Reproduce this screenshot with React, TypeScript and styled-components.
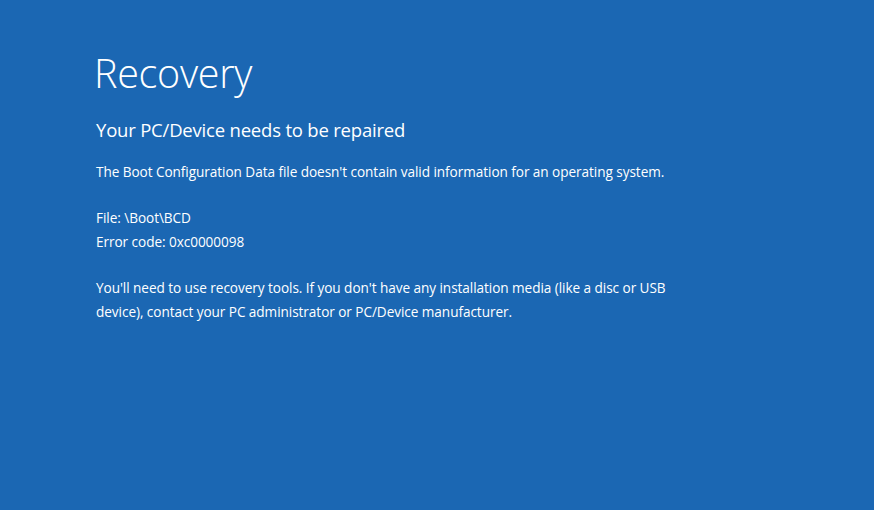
import React from 'react';
import styled, { createGlobalStyle } from 'styled-components';

const GlobalStyle = createGlobalStyle`
  html, body {
    margin: 0;
    padding: 0;
    background: #1b67b3;
  }
  body {
    font-family: "Open Sans", "Noto Sans", "DejaVu Sans", sans-serif;
    color: #ffffff;
  }
`;

const Screen = styled.div`
  width: 874px;
  height: 510px;
  background: #1b67b3;
  box-sizing: border-box;
  padding: 47px 0 0 94px;
  overflow: hidden;
`;

const Title = styled.h1`
  margin: 0;
  font-size: 39.5px;
  font-weight: 300;
  line-height: 52px;
  letter-spacing: -0.3px;
`;

const Subtitle = styled.h2`
  margin: 18px 0 0 2px;
  font-size: 18.5px;
  font-weight: 400;
  line-height: 26px;
  letter-spacing: -0.2px;
`;

const Paragraph = styled.p<{ $gap?: number }>`
  margin: ${({ $gap }) => $gap ?? 22}px 0 0 2px;
  font-size: 13.6px;
  line-height: 24px;
  letter-spacing: -0.06px;
  max-width: 620px;
`;

export default function App() {
  return (
    <>
      <GlobalStyle />
      <Screen>
        <Title>Recovery</Title>
        <Subtitle>Your PC/Device needs to be repaired</Subtitle>
        <Paragraph $gap={17}>
          The Boot Configuration Data file doesn't contain valid information for an operating system.
        </Paragraph>
        <Paragraph>
          File: \Boot\BCD
          <br />
          Error code: 0xc0000098
        </Paragraph>
        <Paragraph>
          You'll need to use recovery tools. If you don't have any installation media (like a disc or USB
          <br />
          device), contact your PC administrator or PC/Device manufacturer.
        </Paragraph>
      </Screen>
    </>
  );
}
